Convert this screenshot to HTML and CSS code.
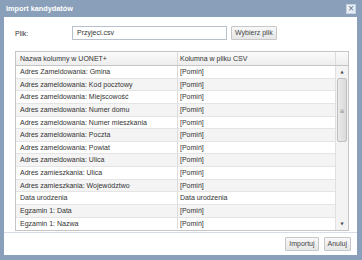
FILE: index.html
```html
<!DOCTYPE html>
<html>
<head>
<meta charset="utf-8">
<link rel="stylesheet" href="styles.css">
</head>
<body>
<div class="dialog">
  <div class="titlebar">
    <span class="title">Import kandydatów</span>
    <span class="close">×</span>
  </div>
  <div class="content">
    <div class="filerow">
      <span class="label">Plik:</span>
      <span class="input">Przyjeci.csv</span>
      <span class="btn">Wybierz plik</span>
    </div>
    <div class="grid">
      <div class="ghead">
        <div class="c1">Nazwa kolumny w UONET+</div>
        <div class="c2">Kolumna w pliku CSV</div>
        <div class="c3"></div>
      </div>
      <div class="gbody">
        <div class="rows">
          <div class="row"><div class="c1">Adres Zameldowania: Gmina</div><div class="c2">[Pomiń]</div></div>
          <div class="row alt"><div class="c1">Adres zameldowania: Kod pocztowy</div><div class="c2">[Pomiń]</div></div>
          <div class="row"><div class="c1">Adres zameldowania: Miejscowość</div><div class="c2">[Pomiń]</div></div>
          <div class="row alt"><div class="c1">Adres zameldowania: Numer domu</div><div class="c2">[Pomiń]</div></div>
          <div class="row"><div class="c1">Adres zameldowania: Numer mieszkania</div><div class="c2">[Pomiń]</div></div>
          <div class="row alt"><div class="c1">Adres zameldowania: Poczta</div><div class="c2">[Pomiń]</div></div>
          <div class="row"><div class="c1">Adres zameldowania: Powiat</div><div class="c2">[Pomiń]</div></div>
          <div class="row alt"><div class="c1">Adres zameldowania: Ulica</div><div class="c2">[Pomiń]</div></div>
          <div class="row"><div class="c1">Adres zamieszkania: Ulica</div><div class="c2">[Pomiń]</div></div>
          <div class="row alt"><div class="c1">Adres zamieszkania: Województwo</div><div class="c2">[Pomiń]</div></div>
          <div class="row"><div class="c1">Data urodzenia</div><div class="c2">Data urodzenia</div></div>
          <div class="row alt"><div class="c1">Egzamin 1: Data</div><div class="c2">[Pomiń]</div></div>
          <div class="row"><div class="c1">Egzamin 1: Nazwa</div><div class="c2">[Pomiń]</div></div>
        </div>
        <div class="scrollbar">
          <div class="arrow up">▲</div>
          <div class="track"><div class="thumb"><span class="grip">≡</span></div></div>
          <div class="arrow down">▼</div>
        </div>
      </div>
    </div>
    <div class="footer">
      <span class="btn">Importuj</span>
      <span class="btn">Anuluj</span>
    </div>
  </div>
</div>
</body>
</html>
```
FILE: styles.css
```css
html, body { margin: 0; padding: 0; }
body { width: 362px; height: 260px; overflow: hidden; font-family: "Liberation Sans", Arial, sans-serif; font-size: 7px; color: #333; }
.dialog {
  width: 362px; height: 260px; box-sizing: border-box;
  background: #8a9fb9; padding: 0 5px 5px 4px;
  display: flex; flex-direction: column;
}
.titlebar { height: 17px; display: flex; align-items: center; justify-content: space-between; padding: 0 1px 0 2px; }
.title { color: #fff; font-weight: bold; font-size: 7.3px; }
.close { width: 8px; height: 8px; background: #e8eef6; border: 1px solid #c8d3e2; color: #5a6f8c; font-size: 8px; line-height: 8px; text-align: center; font-family: "DejaVu Sans", sans-serif; }
.content { flex: 1; background: #fff; display: flex; flex-direction: column; padding: 9px 5px 0 11px; }
.filerow { display: flex; align-items: center; height: 14px; }
.label { width: 57px; }
.input { width: 149px; height: 12px; border: 1px solid #b8c0cc; line-height: 12px; padding-left: 4px; }
.btn { height: 12px; line-height: 12px; padding: 0 3px; border: 1px solid #c7c7c7; background: linear-gradient(#f8f8f8, #e6e6e6); border-radius: 1px; color: #444; }
.filerow .btn { margin-left: 4px; }
.grid { margin-top: 11px; width: 332px; border: 1px solid #c5c5c5; display: flex; flex-direction: column; }
.ghead { display: flex; height: 13px; background: linear-gradient(#fbfbfb, #ededed); border-bottom: 1px solid #c5c5c5; }
.ghead div { line-height: 13px; }
.c1 { width: 157px; padding-left: 4px; border-right: 1px solid #dcdcdc; white-space: nowrap; overflow: hidden; }
.c2 { flex: 1; padding-left: 2px; white-space: nowrap; }
.ghead .c2 { border-right: 1px solid #dcdcdc; }
.c3 { width: 12px; }
.gbody { display: flex; height: 164px; overflow: hidden; }
.rows { flex: 1; display: flex; flex-direction: column; }
.row { display: flex; height: 11.65px; line-height: 11.65px; border-bottom: 1px solid #e4e4e4; flex: none; }
.row:last-child { border-bottom: none; }
.row.alt { background: #f4f4f4; }
.scrollbar { width: 12px; display: flex; flex-direction: column; background: #f3f3f3; border-left: 1px solid #e0e0e0; }
.arrow { height: 12px; font-size: 4px; line-height: 12px; text-align: center; color: #444; font-family: "DejaVu Sans", sans-serif; }
.track { flex: 1; padding: 0 1px; }
.thumb { height: 62px; background: linear-gradient(90deg, #eaeaea, #dadada); border: 1px solid #c0c0c0; border-radius: 2px; display: flex; align-items: center; justify-content: center; }
.grip { font-size: 6px; color: #888; font-family: "DejaVu Sans", sans-serif; }
.footer { margin-top: auto; border-top: 1px solid #d7dde6; height: 22px; display: flex; justify-content: flex-end; align-items: center; gap: 5px; padding-right: 6px; margin-left: -11px; margin-right: -5px; }
```
